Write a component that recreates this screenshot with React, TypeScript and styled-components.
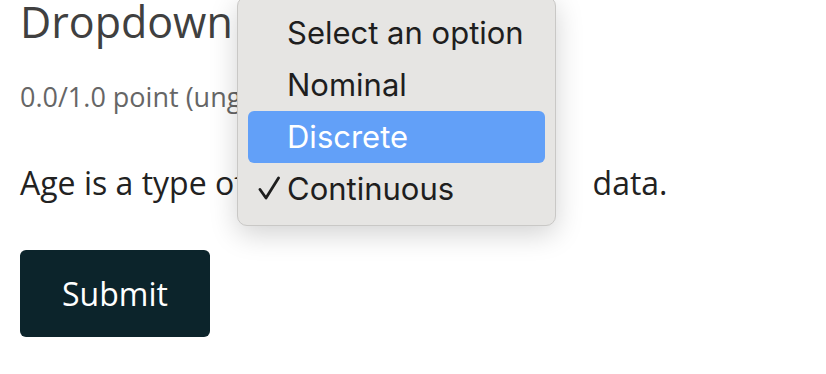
import React from 'react';
import styled, { createGlobalStyle } from 'styled-components';

const GlobalStyle = createGlobalStyle`
	html, body {
		margin: 0;
		padding: 0;
		background: #fff;
	}
	body {
		font-family: 'Open Sans', 'Liberation Sans', sans-serif;
	}
`;

const options = ['Select an option', 'Nominal', 'Discrete', 'Continuous'];

const CheckIcon = () => (
	<CheckSvg viewBox="0 0 22 24" width="22" height="24">
		<path d="M2 13.5 L8 22 L20.5 2" fill="none" stroke="#1e1e1e" strokeWidth="2.8" strokeLinecap="round" strokeLinejoin="round" />
	</CheckSvg>
);

const App = () => {
	const highlighted = 'Discrete';
	const checked = 'Continuous';
	return (
		<>
			<GlobalStyle />
			<Page>
				<Title>Dropdown</Title>
				<Points>0.0/1.0 point (ungraded)</Points>
				<Question>
					Age is a type of <SelectSlot aria-hidden /> data.
					<Menu>
						{options.map((opt) => (
							<MenuItem key={opt} $active={opt === highlighted}>
								{opt === checked && <CheckIcon />}
								{opt}
							</MenuItem>
						))}
					</Menu>
				</Question>
				<SubmitButton type="button">Submit</SubmitButton>
			</Page>
		</>
	);
};

export default App;

const Page = styled.div`
	position: relative;
	padding: 0 20px;
	display: flex;
	flex-direction: column;
	align-items: flex-start;
	height: 374px;
	overflow: hidden;
`;

const Title = styled.h1`
	margin: 0;
	font-size: 43px;
	line-height: 44px;
	font-weight: 400;
	color: #404040;
`;

const Points = styled.p`
	margin: 36px 0 0;
	font-size: 27px;
	line-height: 34px;
	color: #666;
`;

const Question = styled.p`
	margin: 47px 0 0;
	font-size: 32px;
	line-height: 44px;
	color: #222;
	white-space: nowrap;
`;

const SelectSlot = styled.span`
	display: inline-block;
	width: 331px;
	height: 40px;
	vertical-align: middle;
`;

const Menu = styled.ul`
	position: absolute;
	left: 237px;
	top: -4px;
	width: 297px;
	margin: 0;
	padding: 10px;
	list-style: none;
	background: #e6e5e3;
	border: 1px solid #c9c8c6;
	border-radius: 10px;
	box-shadow: 0 8px 28px rgba(0, 0, 0, 0.18);
	font-family: Inter, 'Liberation Sans', sans-serif;
`;

const MenuItem = styled.li<{ $active?: boolean }>`
	position: relative;
	height: 52px;
	line-height: 52px;
	padding-left: 39px;
	font-size: 31px;
	border-radius: 6px;
	color: ${(p) => (p.$active ? '#fff' : '#1e1e1e')};
	background: ${(p) => (p.$active ? '#62a0f8' : 'transparent')};
`;

const CheckSvg = styled.svg`
	position: absolute;
	left: 10px;
	top: 13px;
`;

const SubmitButton = styled.button`
	margin-top: 44px;
	width: 190px;
	height: 87px;
	border: none;
	border-radius: 6px;
	background: #0c242b;
	color: #fff;
	font-family: 'Open Sans', 'Liberation Sans', sans-serif;
	font-size: 32px;
	cursor: pointer;
`;
